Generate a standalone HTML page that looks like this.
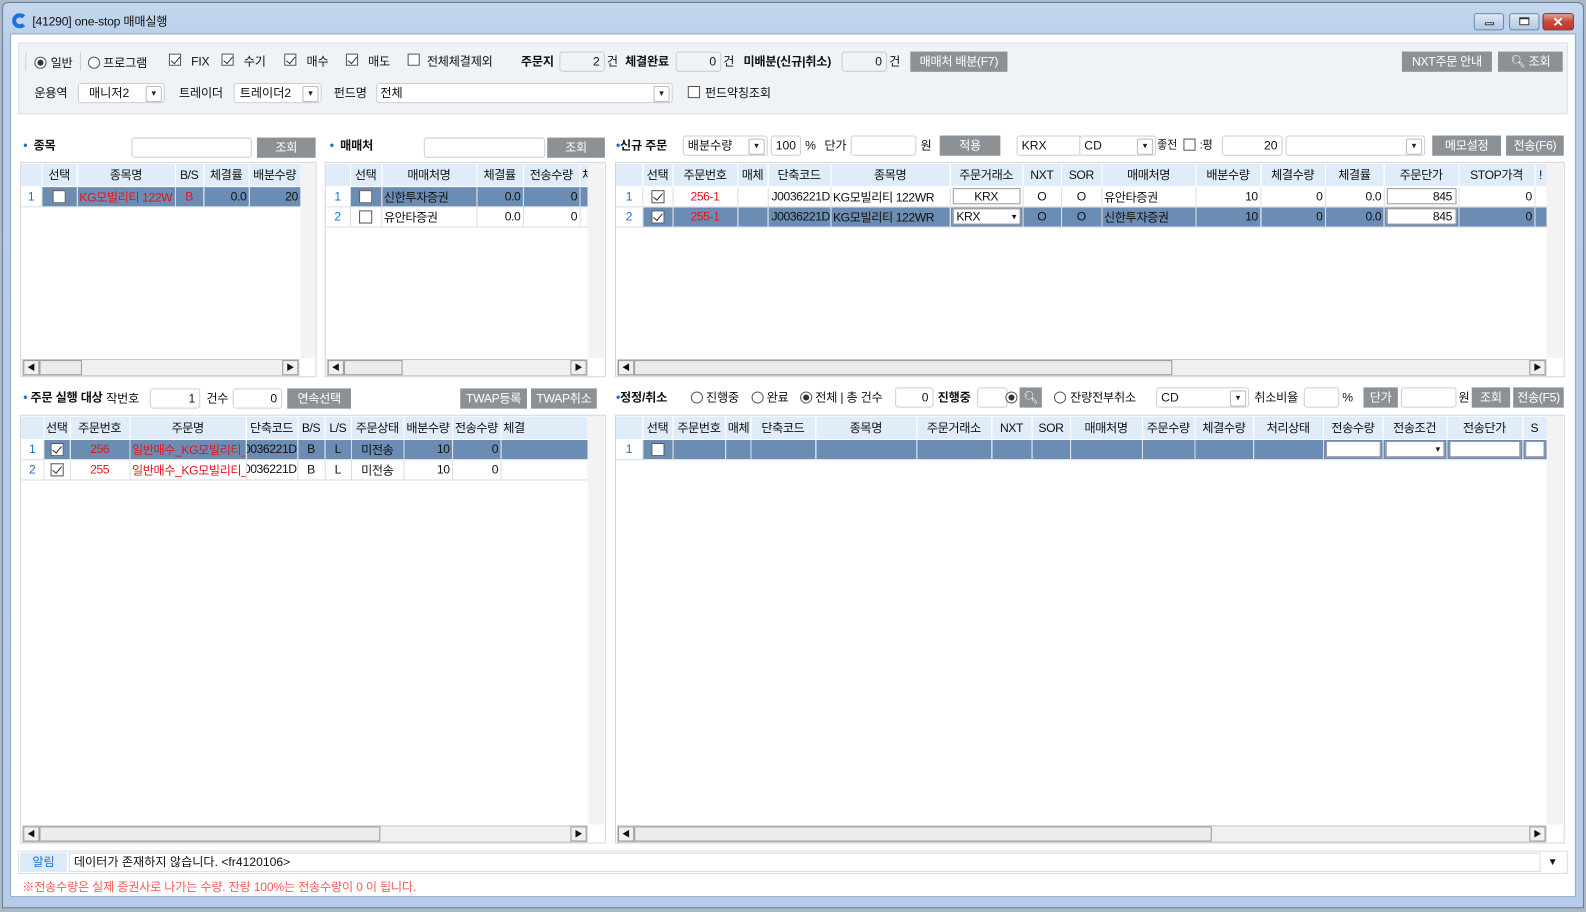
<!DOCTYPE html>
<html><head><meta charset="utf-8">
<style>
*{box-sizing:border-box;margin:0;padding:0}
body{width:1586px;height:912px;overflow:hidden;background:#aab8c8;font-family:"Liberation Sans","Noto Sans CJK KR",sans-serif;font-size:12px;color:#111;position:relative}
#w{position:absolute;left:0;top:0;width:1568px;height:902px;transform:scale(1.01148);transform-origin:0 0}
.a{position:absolute}
.win{left:2px;top:2px;width:1564px;height:896px;background:linear-gradient(#c4d7ee,#b8cfea 40px,#b5cde8);border:1px solid #6a7f99;border-radius:6px 6px 0 0}
.content{left:10px;top:33px;width:1548px;height:854px;background:#fff;border:1px solid #8fa4bd}
.panel{left:18px;top:42px;width:1532px;height:71px;background:#f0f3f5;border:1px solid #dcdfe3}
.t{position:absolute;white-space:nowrap;line-height:14px;letter-spacing:-0.2px}
.b{font-weight:bold}
.cb{position:absolute;width:12px;height:12px;border:1px solid #555;background:#fff}
.cb.k::after{content:"";position:absolute;left:3px;top:0px;width:4px;height:8px;border:solid #333;border-width:0 1.5px 1.5px 0;transform:rotate(40deg)}
.rd{position:absolute;width:12px;height:12px;border:1px solid #555;border-radius:50%;background:#fff}
.rd.k::after{content:"";position:absolute;left:2px;top:2px;width:6px;height:6px;border-radius:50%;background:#333}
.inp{position:absolute;height:20px;border:1px solid #ccd;border-radius:3px;background:#fff;line-height:18px;padding:0 4px;white-space:nowrap}
.r{text-align:right}
.btn{position:absolute;height:20px;background:#8c9196;color:#fff;text-align:center;line-height:20px;white-space:nowrap;letter-spacing:-0.3px}
.dd::after{content:"▾";position:absolute;right:2px;top:2px;width:14px;height:14px;border:1px solid #bbb;border-radius:2px;font-size:9px;line-height:13px;text-align:center;background:#fff;color:#222}
.dot{color:#1e6fd0;font-weight:bold}
.grid{position:absolute;border:1px solid #d0d6de;background:#fff;overflow:hidden}
table{border-collapse:collapse;table-layout:fixed;position:absolute;left:0;top:1px}
td{height:20px;border-right:1px solid #d8dde4;border-bottom:1px solid #d8dde4;white-space:nowrap;overflow:hidden;padding:0 2px;font-size:12px;letter-spacing:-0.4px}
tr.h td{background:#e0ecfa;text-align:center;height:22px;border-color:#fff}
tr.s td{background:#6c8db3;color:#111}
td.n{color:#1e6fd0!important;text-align:center;background:#fff!important}
td.c{text-align:center}
td.rr{text-align:right}
td.rt{direction:rtl;text-align:right;padding:0}
.red{color:#e3141e!important}
.vs{position:absolute;width:16px;background:#f3f3f3}
.hs{position:absolute;height:17px;background:#f0f0f0;border:1px solid #c8c8c8}
.hs .l,.hs .rt{position:absolute;top:0;width:16px;height:15px;background:#f0f0f0;border:1px solid #999;font-size:8px;line-height:13px;text-align:center}
.hs .l{left:0}.hs .rt{right:0}
.hs .th{position:absolute;top:0;height:15px;background:#ececec;border:1px solid #999}
.cin{display:inline-block;width:13px;height:13px;border:1px solid #555;background:#fff;vertical-align:middle;position:relative}
.cin.k::after{content:"";position:absolute;left:3px;top:0;width:4px;height:8px;border:solid #333;border-width:0 1.5px 1.5px 0;transform:rotate(40deg)}
.cell{display:block;background:#fff;border:1px solid #999;height:16px;line-height:14px;padding:0 3px}
</style></head><body><div id="w">
<div class="a win"></div>
<div class="a" style="left:12px;top:13px;width:15px;height:15px;border-radius:50%;border:4px solid #1e72d8;border-right-color:transparent"></div>
<div class="t" style="left:32px;top:14px;font-size:12px">[41290] one-stop 매매실행</div>
<div class="a" style="left:1457px;top:13px;width:30px;height:17px;border:1px solid #6d86a6;border-radius:3px;background:linear-gradient(#dce8f6,#b3c8e2)"><div class="a" style="left:10px;top:8px;width:9px;height:3px;border:1px solid #333;background:#fff"></div></div>
<div class="a" style="left:1492px;top:13px;width:30px;height:17px;border:1px solid #6d86a6;border-radius:3px;background:linear-gradient(#dce8f6,#b3c8e2)"><div class="a" style="left:9px;top:3px;width:10px;height:8px;border:1px solid #333;border-top-width:2px;background:#fff"></div></div>
<div class="a" style="left:1525px;top:13px;width:31px;height:17px;border:1px solid #7a2a20;border-radius:3px;background:linear-gradient(#e8a090,#c8473a 50%,#c0392b);color:#fff;font-weight:bold;text-align:center;line-height:15px;font-size:13px">✕</div>
<div class="a content"></div>
<div class="a panel"></div>
<div class="a" style="left:25px;top:52px;width:1px;height:18px;background:#ccc"></div>
<div class="rd k" style="left:34px;top:56px"></div><div class="t" style="left:50px;top:55px">일반</div>
<div class="a" style="left:79px;top:52px;width:1px;height:18px;background:#ccc"></div>
<div class="rd" style="left:87px;top:56px"></div><div class="t" style="left:102px;top:55px">프로그램</div>
<div class="cb k" style="left:167px;top:53px"></div><div class="t" style="left:189px;top:54px">FIX</div>
<div class="cb k" style="left:219px;top:53px"></div><div class="t" style="left:241px;top:54px">수기</div>
<div class="cb k" style="left:281px;top:53px"></div><div class="t" style="left:303px;top:54px">매수</div>
<div class="cb k" style="left:342px;top:53px"></div><div class="t" style="left:364px;top:54px">매도</div>
<div class="cb" style="left:403px;top:53px"></div><div class="t" style="left:422px;top:54px">전체체결제외</div>
<div class="t b" style="left:515px;top:54px">주문지</div>
<div class="inp r" style="left:553px;top:51px;width:45px;background:#f0f3f5">2</div><div class="t" style="left:600px;top:54px">건</div>
<div class="t b" style="left:618px;top:54px">체결완료</div>
<div class="inp r" style="left:668px;top:51px;width:45px;background:#f0f3f5">0</div><div class="t" style="left:715px;top:54px">건</div>
<div class="t b" style="left:735px;top:54px">미배분(신규|취소)</div>
<div class="inp r" style="left:832px;top:51px;width:45px;background:#f0f3f5">0</div><div class="t" style="left:879px;top:54px">건</div>
<div class="btn" style="left:900px;top:51px;width:96px">매매처 배분(F7)</div>
<div class="btn" style="left:1386px;top:51px;width:89px">NXT주문 안내</div>
<div class="btn" style="left:1481px;top:51px;width:64px">🔍︎ 조회</div>
<div class="t" style="left:34px;top:85px">운용역</div>
<div class="inp dd" style="left:77px;top:82px;width:86px;padding-left:10px">매니저2</div>
<div class="t" style="left:177px;top:85px">트레이더</div>
<div class="inp dd" style="left:231px;top:82px;width:87px;padding-left:5px">트레이더2</div>
<div class="t" style="left:330px;top:85px">펀드명</div>
<div class="inp dd" style="left:372px;top:82px;width:293px;padding-left:3px">전체</div>
<div class="cb" style="left:680px;top:85px"></div><div class="t" style="left:697px;top:85px">펀드약칭조회</div>

<div class="t b" style="left:23px;top:137px"><span class="dot">•</span>&nbsp; 종목</div>
<div class="inp" style="left:130px;top:136px;width:119px"></div>
<div class="btn" style="left:254px;top:136px;width:58px">조회</div>
<div class="t b" style="left:326px;top:137px"><span class="dot">•</span>&nbsp; 매매처</div>
<div class="inp" style="left:419px;top:136px;width:120px"></div>
<div class="btn" style="left:541px;top:136px;width:57px">조회</div>
<div class="t b" style="left:609px;top:137px"><span class="dot">•</span>신규 주문</div>
<div class="inp dd" style="left:675px;top:134px;width:84px">배분수량</div>
<div class="inp r" style="left:762px;top:134px;width:30px">100</div><div class="t" style="left:796px;top:137px">%</div>
<div class="t" style="left:815px;top:137px">단가</div>
<div class="inp" style="left:841px;top:134px;width:65px"></div><div class="t" style="left:910px;top:137px">원</div>
<div class="btn" style="left:929px;top:134px;width:60px">적용</div>
<div class="inp" style="left:1005px;top:134px;width:64px">KRX</div>
<div class="inp dd" style="left:1067px;top:134px;width:76px">CD</div>
<div class="t" style="left:1144px;top:137px;font-size:11px">좋전</div>
<div class="cb" style="left:1170px;top:137px"></div><div class="t" style="left:1186px;top:137px;font-size:11px">:평</div>
<div class="inp r" style="left:1208px;top:134px;width:60px">20</div>
<div class="inp dd" style="left:1271px;top:134px;width:138px"></div>
<div class="btn" style="left:1416px;top:134px;width:68px">메모설정</div>
<div class="btn" style="left:1489px;top:134px;width:57px">전송(F6)</div>

<div class="grid" style="left:20px;top:160px;width:293px;height:213px">
<table style="width:276px"><colgroup><col style="width:20px"><col style="width:35px"><col style="width:97px"><col style="width:28px"><col style="width:45px"><col style="width:51px"></colgroup>
<tr class="h"><td></td><td>선택</td><td>종목명</td><td>B/S</td><td>체결률</td><td>배분수량</td></tr>
<tr class="s"><td class="n">1</td><td class="c"><span class="cin"></span></td><td class="red">KG모빌리티 122W</td><td class="c red">B</td><td class="rr">0.0</td><td class="rr">20</td></tr>
</table>
<div class="vs" style="left:276px;top:0;height:193px"></div>
<div class="hs" style="left:1px;top:194px;width:274px"><div class="l">◀</div><div class="th" style="left:16px;width:42px"></div><div class="rt">▶</div></div>
</div>
<div class="grid" style="left:321px;top:160px;width:278px;height:213px">
<table style="width:259px"><colgroup><col style="width:24px"><col style="width:31px"><col style="width:94px"><col style="width:46px"><col style="width:56px"><col style="width:8px"></colgroup>
<tr class="h"><td></td><td>선택</td><td>매매처명</td><td>체결률</td><td>전송수량</td><td>체</td></tr>
<tr class="s"><td class="n">1</td><td class="c"><span class="cin"></span></td><td>신한투자증권</td><td class="rr">0.0</td><td class="rr">0</td><td></td></tr>
<tr><td class="n">2</td><td class="c"><span class="cin"></span></td><td>유안타증권</td><td class="rr">0.0</td><td class="rr">0</td><td></td></tr>
</table>
<div class="vs" style="left:259px;top:0;height:193px"></div>
<div class="hs" style="left:1px;top:194px;width:258px"><div class="l">◀</div><div class="th" style="left:16px;width:58px"></div><div class="rt">▶</div></div>
</div>
<div class="grid" style="left:608px;top:160px;width:939px;height:213px">
<table style="width:920px"><colgroup><col style="width:26px"><col style="width:30px"><col style="width:64px"><col style="width:30px"><col style="width:62px"><col style="width:118px"><col style="width:72px"><col style="width:38px"><col style="width:40px"><col style="width:93px"><col style="width:64px"><col style="width:64px"><col style="width:58px"><col style="width:74px"><col style="width:75px"><col style="width:12px"></colgroup>
<tr class="h"><td></td><td>선택</td><td>주문번호</td><td>매체</td><td>단축코드</td><td>종목명</td><td>주문거래소</td><td>NXT</td><td>SOR</td><td>매매처명</td><td>배분수량</td><td>체결수량</td><td>체결률</td><td>주문단가</td><td>STOP가격</td><td>!</td></tr>
<tr><td class="n">1</td><td class="c"><span class="cin k"></span></td><td class="c red">256-1</td><td></td><td class="rt">J0036221D</td><td>KG모빌리티 122WR</td><td><span class="cell" style="text-align:center">KRX</span></td><td class="c">O</td><td class="c">O</td><td>유안타증권</td><td class="rr">10</td><td class="rr">0</td><td class="rr">0.0</td><td><span class="cell r">845</span></td><td class="rr">0</td><td></td></tr>
<tr class="s"><td class="n">2</td><td class="c"><span class="cin k"></span></td><td class="c red">255-1</td><td></td><td class="rt">J0036221D</td><td>KG모빌리티 122WR</td><td><span class="cell">KRX <span style="float:right;font-size:9px">▾</span></span></td><td class="c">O</td><td class="c">O</td><td>신한투자증권</td><td class="rr">10</td><td class="rr">0</td><td class="rr">0.0</td><td><span class="cell r">845</span></td><td class="rr">0</td><td></td></tr>
</table>
<div class="vs" style="left:920px;top:0;height:193px"></div>
<div class="hs" style="left:1px;top:194px;width:919px"><div class="l">◀</div><div class="th" style="left:16px;width:532px"></div><div class="rt">▶</div></div>
</div>

<div class="t b" style="left:23px;top:386px"><span class="dot">•</span>&nbsp;주문 실행 대상</div>
<div class="t" style="left:105px;top:387px">작번호</div>
<div class="inp r" style="left:148px;top:384px;width:50px">1</div>
<div class="t" style="left:204px;top:387px">건수</div>
<div class="inp r" style="left:230px;top:384px;width:49px">0</div>
<div class="btn" style="left:284px;top:384px;width:63px">연속선택</div>
<div class="btn" style="left:455px;top:384px;width:66px">TWAP등록</div>
<div class="btn" style="left:525px;top:384px;width:65px">TWAP취소</div>

<div class="t b" style="left:609px;top:386px"><span class="dot">•</span>정정/취소</div>
<div class="rd" style="left:683px;top:387px"></div><div class="t" style="left:698px;top:386px">진행중</div>
<div class="rd" style="left:743px;top:387px"></div><div class="t" style="left:758px;top:386px">완료</div>
<div class="rd k" style="left:791px;top:387px"></div><div class="t" style="left:806px;top:386px">전체 | 총 건수</div>
<div class="inp r" style="left:885px;top:383px;width:38px">0</div>
<div class="t b" style="left:927px;top:386px">진행중</div>
<div class="inp" style="left:966px;top:383px;width:30px"></div>
<div class="rd k" style="left:994px;top:387px"></div>
<div class="btn" style="left:1008px;top:383px;width:22px">🔍︎</div>
<div class="rd" style="left:1042px;top:387px"></div><div class="t" style="left:1058px;top:386px">잔량전부취소</div>
<div class="inp dd" style="left:1143px;top:383px;width:92px">CD</div>
<div class="t" style="left:1240px;top:386px">취소비율</div>
<div class="inp" style="left:1289px;top:383px;width:35px"></div><div class="t" style="left:1327px;top:386px">%</div>
<div class="btn" style="left:1348px;top:383px;width:34px">단가</div>
<div class="inp" style="left:1385px;top:383px;width:55px"></div><div class="t" style="left:1442px;top:386px">원</div>
<div class="btn" style="left:1455px;top:383px;width:38px">조회</div>
<div class="btn" style="left:1496px;top:383px;width:50px">전송(F5)</div>

<div class="grid" style="left:20px;top:410px;width:579px;height:424px">
<table style="width:560px"><colgroup><col style="width:22px"><col style="width:26px"><col style="width:59px"><col style="width:115px"><col style="width:51px"><col style="width:27px"><col style="width:26px"><col style="width:52px"><col style="width:48px"><col style="width:48px"><col style="width:86px"></colgroup>
<tr class="h"><td></td><td>선택</td><td>주문번호</td><td>주문명</td><td>단축코드</td><td>B/S</td><td>L/S</td><td>주문상태</td><td>배분수량</td><td>전송수량</td><td style="text-align:left">체결</td></tr>
<tr class="s"><td class="n">1</td><td class="c"><span class="cin k"></span></td><td class="c red">256</td><td class="red">일반매수_KG모빌리티_0400</td><td class="rt">J0036221D</td><td class="c">B</td><td class="c">L</td><td class="c">미전송</td><td class="rr">10</td><td class="rr">0</td><td></td></tr>
<tr><td class="n">2</td><td class="c"><span class="cin k"></span></td><td class="c red">255</td><td class="red">일반매수_KG모빌리티_0300</td><td class="rt">J0036221D</td><td class="c">B</td><td class="c">L</td><td class="c">미전송</td><td class="rr">10</td><td class="rr">0</td><td></td></tr>
</table>
<div class="vs" style="left:560px;top:0;height:404px"></div>
<div class="hs" style="left:1px;top:405px;width:559px"><div class="l">◀</div><div class="th" style="left:16px;width:337px"></div><div class="rt">▶</div></div>
</div>
<div class="grid" style="left:608px;top:410px;width:939px;height:424px">
<table style="width:920px"><colgroup><col style="width:26px"><col style="width:30px"><col style="width:52px"><col style="width:25px"><col style="width:64px"><col style="width:100px"><col style="width:74px"><col style="width:40px"><col style="width:38px"><col style="width:71px"><col style="width:52px"><col style="width:58px"><col style="width:69px"><col style="width:59px"><col style="width:63px"><col style="width:75px"><col style="width:24px"></colgroup>
<tr class="h"><td></td><td>선택</td><td>주문번호</td><td>매체</td><td>단축코드</td><td>종목명</td><td>주문거래소</td><td>NXT</td><td>SOR</td><td>매매처명</td><td>주문수량</td><td>체결수량</td><td>처리상태</td><td>전송수량</td><td>전송조건</td><td>전송단가</td><td>S</td></tr>
<tr class="s"><td class="n">1</td><td class="c"><span class="cin"></span></td><td></td><td></td><td></td><td></td><td></td><td></td><td></td><td></td><td></td><td></td><td></td><td><span class="cell"></span></td><td><span class="cell"><span style="float:right;font-size:9px">▾</span></span></td><td><span class="cell"></span></td><td><span class="cell"></span></td></tr>
</table>
<div class="vs" style="left:920px;top:0;height:404px"></div>
<div class="hs" style="left:1px;top:405px;width:919px"><div class="l">◀</div><div class="th" style="left:16px;width:571px"></div><div class="rt">▶</div></div>
</div>

<div class="a" style="left:18px;top:841px;width:1532px;height:23px;border:1px solid #d8dde4;background:#fff"></div>
<div class="a" style="left:20px;top:843px;width:46px;height:19px;background:#dbeafb;color:#1e6fd0;text-align:center;line-height:19px">알림</div>
<div class="a" style="left:68px;top:843px;width:1455px;height:19px;border:1px solid #d8dde4;line-height:17px;padding-left:4px">데이터가 존재하지 않습니다. &lt;fr4120106&gt;</div>
<div class="t" style="left:1530px;top:846px;font-size:10px">▼</div>
<div class="t" style="left:22px;top:870px;color:#ff5a5a">※전송수량은 실제 증권사로 나가는 수량. 잔량 100%는 전송수량이 0 이 됩니다.</div>
</div></body></html>
